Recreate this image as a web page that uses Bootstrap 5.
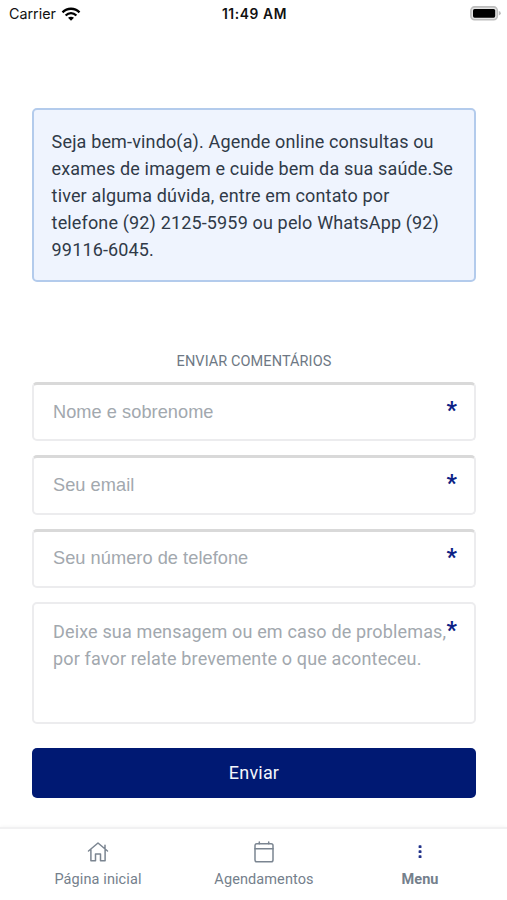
<!DOCTYPE html>
<html lang="pt-BR">
<head>
<meta charset="utf-8">
<meta name="viewport" content="width=device-width, initial-scale=1">
<title>Enviar comentários</title>
<link href="https://cdn.jsdelivr.net/npm/bootstrap@5.3.0/dist/css/bootstrap.min.css" rel="stylesheet">
<style>
  body { font-family: Roboto, sans-serif; height: 900px; overflow: hidden; }
  .status-bar { height: 28px; padding: 0 6px 0 9px; font: 14.3px/28px Inter, sans-serif; color: #111; }
  .status-bar > div { flex: 1 1 0; }
  .status-bar .status-time { flex: 0 0 auto; margin-right: 1px; font-size: 13.8px; letter-spacing: .6px; font-weight: 600; }
  .wifi { margin-left: 5px; }
  .page-body { padding: 80px 31px 0 32px; }
  .welcome { height: 174px; padding: 17.6px 18px 0 17.6px; border: 2px solid #b3cbec; border-radius: 5px; background: #eff4fe; color: #303a48; font-size: 18px; line-height: 27px; letter-spacing: .15px; white-space: nowrap; }
  .form-title { margin: 68px 0 9px; font-size: 14.5px; line-height: 23px; color: #6e7884; letter-spacing: .08px; }
  .fields { gap: 14px; }
  .field .form-control { height: 59.3px; padding: 0 19px; border: 2px solid #ececee; border-top: 3px solid #d9d9d9; border-radius: 5px; font: 18.2px/27px "Liberation Sans", sans-serif; letter-spacing: .05px; }
  .field textarea.form-control { height: 122px; padding: 14px 0 0 19px; border-top: 2px solid #ececee; resize: none; overflow: hidden; font: 18px/27px Roboto, sans-serif; letter-spacing: .15px; }
  .field .form-control::placeholder { color: #a2a8ae; opacity: 1; }
  .required-mark { right: 19px; top: 13px; font-size: 23px; line-height: 32px; font-weight: 700; color: #0b2285; }
  .btn-send { margin-top: 10px; height: 50px; border: 0; border-radius: 5px; background: #001973; color: #f4f6fb; font-size: 18px; letter-spacing: .2px; }
  .tab-bar { height: 73px; padding: 0 14px 0 15px; border-top: 2px solid #f1f1f2; box-shadow: 0 -1px 3px rgba(0,0,0,.03); }
  .tab-bar a { width: 166px; padding-top: 12px; color: #74808c; font-size: 14.5px; line-height: 20px; letter-spacing: .1px; }
  .tab-bar a:last-child { width: 146px; }
  .tab-bar svg { display: block; margin: 0 auto 7px; }
</style>
<script src="https://cdn.jsdelivr.net/npm/bootstrap@5.3.0/dist/js/bootstrap.bundle.min.js"></script>
</head>
<body class="bg-white d-flex flex-column">
<header class="status-bar d-flex align-items-center">
  <div class="d-flex align-items-center">Carrier
    <svg class="wifi" width="20" height="14" viewBox="0 0 20 14" fill="none" stroke="#000" stroke-width="2.3"><path d="M1.500 5.400C6.300.5 13.700.5 18.500 5.400M4.600 8.500c3.200-3 7.600-3 10.800 0"/><path d="M7 10.800C8.700 9.300 11.300 9.300 13 10.800L10 13.800z" fill="#000" stroke="none"/></svg>
  </div>
  <div class="status-time text-center">11:49 AM</div>
  <div class="d-flex justify-content-end">
    <svg width="31" height="16" viewBox="0 0 31 16"><rect x=".9" y=".9" width="26.400" height="12.800" rx="3.600" fill="#e4e4e4" stroke="#bdbdbd" stroke-width="1.600"/><rect x="3" y="2.900" width="22.200" height="8.800" rx="1.600"/><path d="M28.800 5.100q2 .6 2 2.200t-2 2.200z" fill="#b9b9b9"/></svg>
  </div>
</header>
<main class="page-body flex-grow-1">
  <div class="welcome">Seja bem-vindo(a). Agende online consultas ou<br>exames de imagem e cuide bem da sua saúde.Se<br>tiver alguma dúvida, entre em contato por<br>telefone (92) 2125-5959 ou pelo WhatsApp (92)<br>99116-6045.</div>
  <h1 class="form-title text-center fw-normal text-uppercase">Enviar comentários</h1>
  <form class="fields d-flex flex-column">
    <div class="field position-relative"><input class="form-control" placeholder="Nome e sobrenome"><span class="required-mark position-absolute">*</span></div>
    <div class="field position-relative"><input type="email" class="form-control" placeholder="Seu email"><span class="required-mark position-absolute">*</span></div>
    <div class="field position-relative"><input type="tel" class="form-control" placeholder="Seu número de telefone"><span class="required-mark position-absolute">*</span></div>
    <div class="field position-relative"><textarea class="form-control d-block" placeholder="Deixe sua mensagem ou em caso de problemas, por favor relate brevemente o que aconteceu."></textarea><span class="required-mark position-absolute">*</span></div>
    <button type="button" class="btn btn-send w-100">Enviar</button>
  </form>
</main>
<nav class="tab-bar d-flex bg-white">
  <a href="#" class="text-center text-decoration-none">
    <svg width="22" height="22" viewBox="0 0 22 22" fill="none" stroke="#7b8591" stroke-width="1.500" stroke-linejoin="round" stroke-linecap="round"><path d="M1.500 10 11 2l9.500 8M18 7.600V4.200M3.900 8.500V19.800H8.500V13h5v6.800h4.600V8.500"/></svg>Página inicial</a>
  <a href="#" class="text-center text-decoration-none">
    <svg width="22" height="22" viewBox="0 0 22 22" fill="none" stroke="#7b8591" stroke-width="1.500" stroke-linecap="round"><rect x="2" y="2.800" width="18" height="18" rx="1.800"/><path d="M2 7.700h18M6.300.9v1.900M15.700.9v1.900"/></svg>Agendamentos</a>
  <a href="#" class="text-center text-decoration-none fw-bold">
    <svg width="22" height="22" viewBox="0 0 22 22" fill="#22338a"><rect x="9.600" y="4.200" width="2.900" height="2.900" rx=".7"/><rect x="9.600" y="9.200" width="2.900" height="2.900" rx=".7"/><rect x="9.600" y="14.200" width="2.900" height="2.900" rx=".7"/></svg>Menu</a>
</nav>
</body>
</html>
